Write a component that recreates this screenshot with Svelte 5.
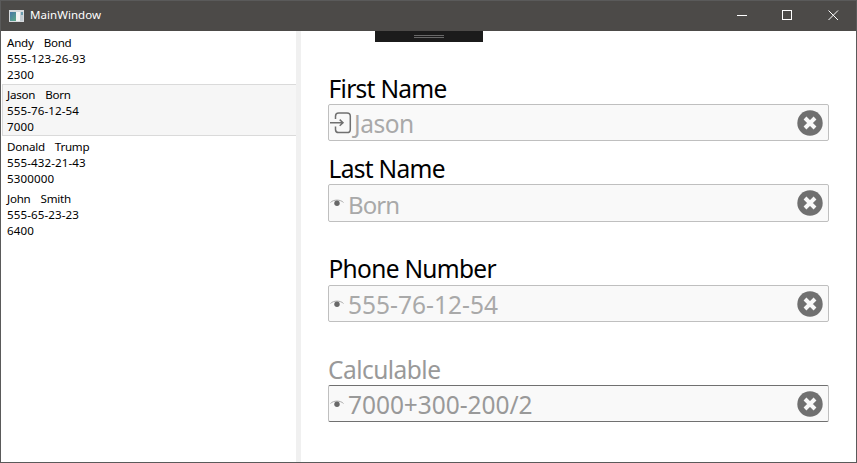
<script>
  const people = [
    { first: 'Andy', last: 'Bond', phone: '555-123-26-93', amount: '2300' },
    { first: 'Jason', last: 'Born', phone: '555-76-12-54', amount: '7000' },
    { first: 'Donald', last: 'Trump', phone: '555-432-21-43', amount: '5300000' },
    { first: 'John', last: 'Smith', phone: '555-65-23-23', amount: '6400' }
  ];
  const selected = 1;
  const fields = [
    { id: 'first', label: 'First Name', value: 'Jason', icon: 'enter' },
    { id: 'last', label: 'Last Name', value: 'Born', icon: 'eye' },
    { id: 'phone', label: 'Phone Number', value: '555-76-12-54', icon: 'eye' },
    { id: 'calc', label: 'Calculable', value: '7000+300-200/2', icon: 'eye' }
  ];
</script>

<div class="window">
  <header>
    <svg class="app" width="15" height="12" viewBox="0 0 15 12">
      <defs>
        <linearGradient id="pane" x1="0" y1="0" x2="1" y2="1">
          <stop offset="0" stop-color="#4777a8" />
          <stop offset="1" stop-color="#5fae82" />
        </linearGradient>
      </defs>
      <rect width="15" height="12" fill="#d7dadd" />
      <rect x="1" y="2" width="8" height="9" fill="url(#pane)" />
      <rect x="7" y="2" width="4" height="9" fill="#f4f4f4" />
      <rect x="11" y="2" width="3" height="9" fill="#c3ccd2" />
      <rect x="12" y="2" width="2" height="3" fill="#6a9cae" />
    </svg>
    <span class="title">MainWindow</span>
    <div class="controls">
      <svg width="46" height="30" viewBox="0 0 46 30"><path d="M18 14.5h10" /></svg>
      <svg width="46" height="30" viewBox="0 0 46 30"><rect x="17.5" y="9.5" width="9" height="9" /></svg>
      <svg width="46" height="30" viewBox="0 0 46 30"><path d="M17.500 9.500l9.500 9.500M27 9.500l-9.500 9.500" /></svg>
    </div>
  </header>
  <main>
    <div class="list">
      {#each people as p, i}
        <div class="row" class:selected={i === selected}>
          <div class="name"><span>{p.first}</span><span>{p.last}</span></div>
          <div class="num">{p.phone}</div>
          <div class="num">{p.amount}</div>
        </div>
      {/each}
    </div>
    <div class="splitter"></div>
    <div class="form">
      <div class="toolbar"><i></i></div>
      {#each fields as f}
        <div class="field {f.id}">
          <div class="label">{f.label}</div>
          <div class="box">
            {#if f.icon === 'enter'}
              <svg class="enter" width="22" height="24" viewBox="0 0 22 24">
                <path d="M5.500 8V5.200Q5.500 2 8.700 2H17Q20.300 2 20.300 5.200V18.400Q20.300 21.600 17 21.600H8.700Q5.500 21.600 5.500 18.400V15.500" />
                <path d="M0 11.700H12.500M9.700 8.600L13 11.700L9.700 14.800" />
              </svg>
            {:else}
              <svg class="eye" width="14" height="8" viewBox="0 0 14 8">
                <path d="M.5 3.500C3.500 .3 10.500 .3 13.500 3.500" />
                <circle cx="7" cy="4.200" r="2.700" />
              </svg>
            {/if}
            <span class="value">{f.value}</span>
            <svg class="clear" width="26" height="26" viewBox="0 0 26 26">
              <circle cx="13" cy="13" r="12.700" />
              <path d="M8 8l10 10M18 8l-10 10" />
            </svg>
          </div>
        </div>
      {/each}
    </div>
  </main>
</div>

<style>
  .window {
    box-sizing: border-box;
    width: 857px;
    height: 463px;
    border: 1px solid #5a5a5a;
    background: #fff;
    display: flex;
    flex-direction: column;
    overflow: hidden;
    font-family: 'Noto Sans', 'Open Sans', sans-serif;
    color: #000;
  }
  header {
    height: 30px;
    flex: none;
    background: #4c4a48;
    display: flex;
    align-items: center;
    color: #fff;
  }
  .app { margin-left: 8px; }
  .title { margin-left: 6px; font-size: 11.5px; letter-spacing: 0.05px; line-height: 28px; height: 30px; }
  .controls { margin-left: auto; margin-right: -1px; display: flex; }
  .controls svg { fill: none; stroke: #fff; stroke-width: 1; }
  main { flex: 1; display: flex; min-height: 0; }
  .list { width: 294px; padding: 1px 0 0 1px; }
  .row {
    box-sizing: border-box;
    height: 52px;
    padding: 2px 0 0 4px;
    border: 1px solid transparent;
    border-right: 0;
    font-size: 11.6px;
    line-height: 16px;
    white-space: nowrap;
  }
  .selected { background: #f6f6f6; border-color: #dadada; }
  .name { display: flex; gap: 10px; letter-spacing: -0.25px; }
  .num { letter-spacing: 0.1px; }
  .splitter { width: 5px; background: #f0f0f0; }
  .form { flex: 1; display: flex; flex-direction: column; padding: 0 27px; }
  .toolbar {
    width: 108px;
    height: 11px;
    flex: none;
    margin: 0 0 29px 47px;
    background: #1b1b1b;
    display: flex;
    justify-content: center;
  }
  .toolbar i {
    width: 30px;
    height: 1px;
    margin-top: 4px;
    border: solid #686868;
    border-width: 1px 0;
  }
  .field { width: 501px; height: 71px; flex: none; }
  .first { margin-bottom: 9px; }
  .last { margin-bottom: 30px; }
  .phone { margin-bottom: 29px; }
  .label { height: 33px; line-height: 35px; padding-left: 0.5px; font-size: 24.5px; letter-spacing: -0.7px; }
  .phone .label { line-height: 33px; }
  .calc .label { color: #999; letter-spacing: -0.53px; padding-left: 0; }
  .box {
    box-sizing: border-box;
    height: 37px;
    border: 1px solid #bfbfbf;
    border-radius: 2px;
    background: #f9f9f9;
    display: flex;
    align-items: center;
    font-size: 24.5px;
    line-height: 35px;
    color: #a9a9a9;
  }
  .last .box { height: 38px; }
  .calc .box { border-color: #707070 #bfbfbf; color: #999; }
  .enter { fill: none; stroke: #707070; stroke-width: 1.5; margin: 0 2px 0 1px; }
  .eye { margin: 0 4px 0 1px; }
  .eye path { fill: none; stroke: #999; stroke-width: 0.8; }
  .eye circle { fill: #686868; }
  .value { position: relative; top: 1px; letter-spacing: 0.02px; }
  .first .value { letter-spacing: -0.5px; }
  .last .value { font-size: 24px; letter-spacing: -0.9px; }
  .calc .value { letter-spacing: -0.05px; }
  .clear { margin: 0 5px 0 auto; }
  .clear circle { fill: #707070; }
  .clear path { stroke: #f9f9f9; stroke-width: 4; }
</style>
